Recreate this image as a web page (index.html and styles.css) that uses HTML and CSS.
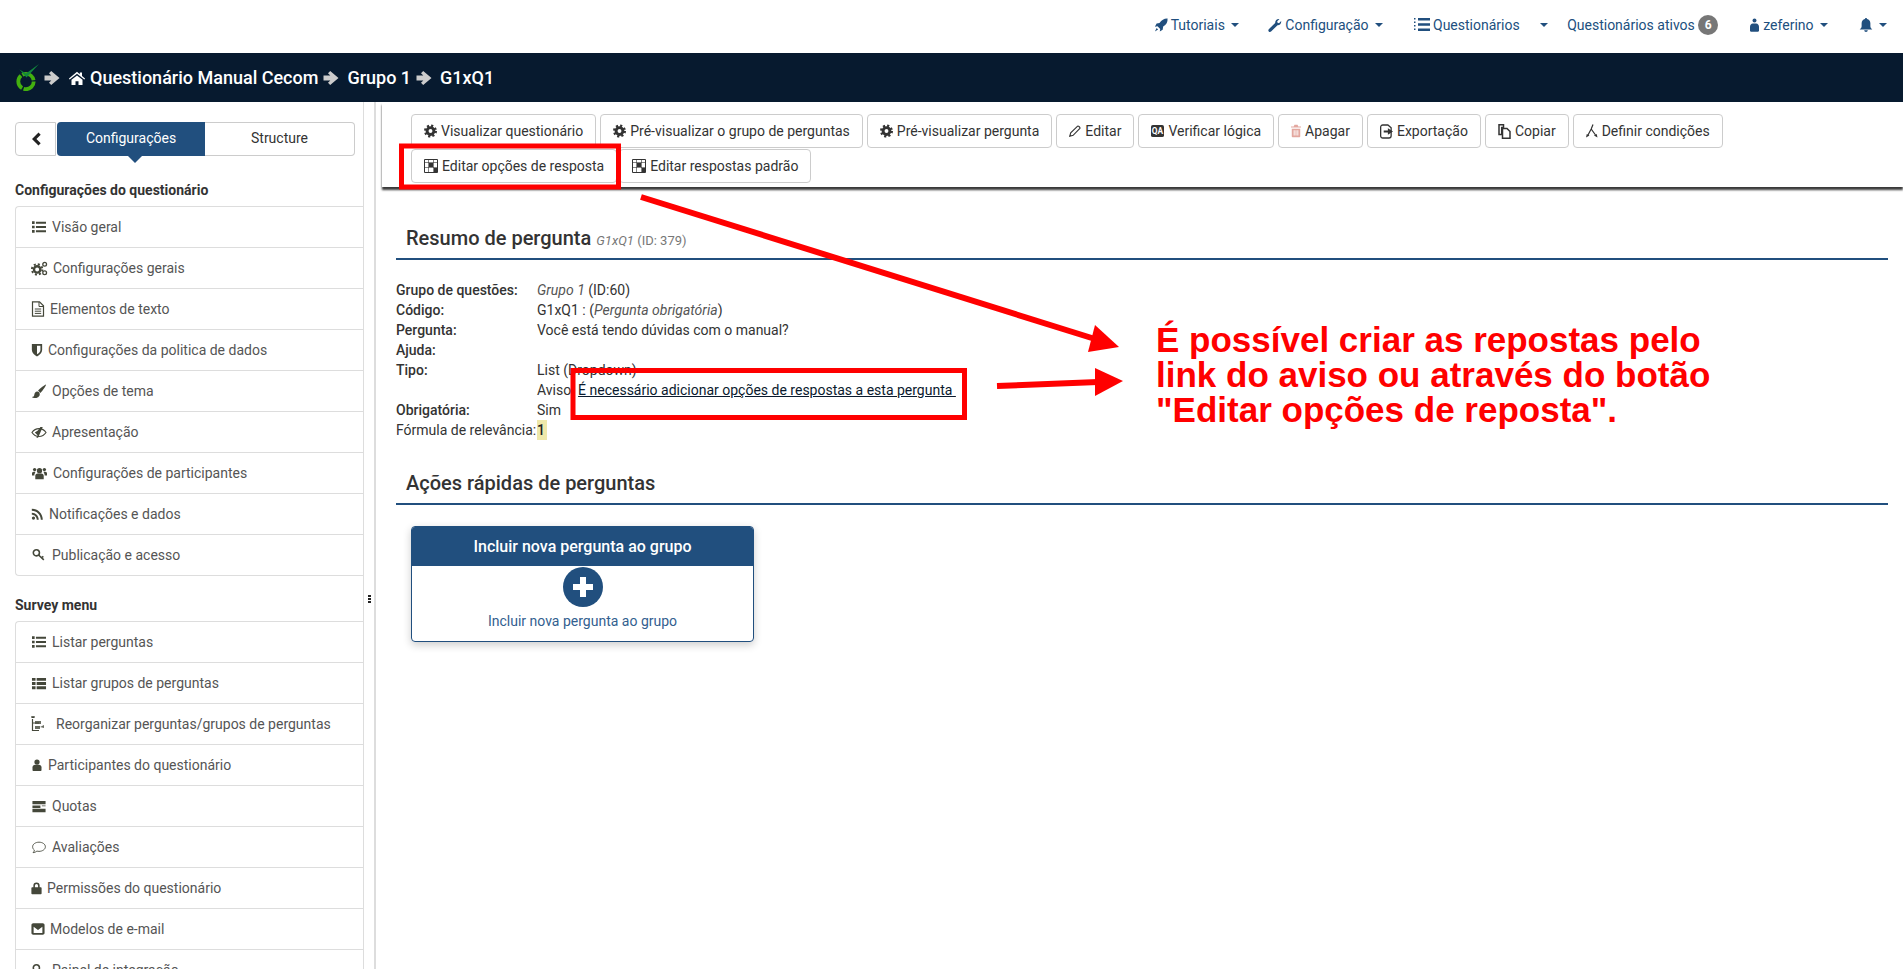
FILE: index.html
```html
<!DOCTYPE html>
<html lang="pt-BR">
<head>
    <meta charset="UTF-8">
    <meta name="viewport" content="width=device-width, initial-scale=1.0">
    <title>Resumo de pergunta</title>
    <link rel="stylesheet" href="styles.css">
</head>
<body>

<svg class="defs" width="0" height="0">
    <symbol id="i-rocket" viewBox="0 0 16 16"><path d="M15.5.5c.3 4-1.400 7-5 9.300l-.6 3.600L6.600 15.500l.5-3L4 9.400l-3 .5L3 6.300l3.300-.6C8.800 2 11.700.3 15.500.5zM3 11.500l1.700 1.700L1 15.500z"/></symbol>
    <symbol id="i-wrench" viewBox="0 0 16 16"><path d="M15 3.500c.6 2.500-1.400 5-4.100 4.800L3.500 15.500c-.8.700-2 .6-2.600-.1-.7-.7-.7-1.800 0-2.500l7.300-7.200C8 3 10.500.7 13 1.300L10.500 3.800l.4 1.700 1.700.4z"/></symbol>
    <symbol id="i-list" viewBox="0 0 16 16"><path d="M0 1.500h3v3H0zM4.500 2h11.500v2.400H4.500zM0 6.500h3v3H0zM4.500 6.800h11.500v2.400H4.500zM0 11.500h3v3H0zM4.500 11.600h11.500V14H4.500z"/></symbol>
    <symbol id="i-dots" viewBox="0 0 16 16"><path d="M0 1h1.500v1.500H0zM0 4.500h1.500V6H0zM0 8h1.500v1.500H0zM0 11.500h1.500V13H0zM4 1h12v2.400H4zM4 6.300h12v2.400H4zM4 11.600h12V14H4z"/></symbol>
    <symbol id="i-user" viewBox="0 0 16 16"><circle cx="8" cy="4" r="3.500"/><path d="M2 15v-4c0-2 1.500-3.500 3.500-3.500h5c2 0 3.500 1.500 3.500 3.500v4c0 .5-.5 1-1 1H3c-.5 0-1-.5-1-1z"/></symbol>
    <symbol id="i-person" viewBox="0 0 10 15"><circle cx="5" cy="2.500" r="2.200"/><path d="M0 14V9.500C0 7.500 1.500 5.800 3 5.800h4c1.500 0 3 1.700 3 3.700V14c0 .5-.5 1-1 1H1c-.5 0-1-.5-1-1z"/></symbol>
    <symbol id="i-bell" viewBox="0 0 16 16"><path d="M8 0c.7 0 1.200.5 1.200 1.200C11.500 1.700 13 3.500 13 6v3.500c0 1.500 1 2.700 2.200 3.500H.8C2 12.200 3 11 3 9.500V6c0-2.500 1.500-4.300 3.800-4.800C6.800.5 7.300 0 8 0zM6 14h4c0 1.100-.9 2-2 2s-2-.9-2-2z"/></symbol>
    <symbol id="i-arrow" viewBox="0 0 16 16"><path d="M.5 5.600h6.800L5 3.300 7.200.9 15.500 8l-8.300 7.100L5 12.700l2.300-2.300H.5z"/></symbol>
    <symbol id="i-home" viewBox="0 0 16 16"><path d="M8 1.800-.2 8.600l.9 1L8 3.700l7.300 5.900.9-1L13 6V2.500h-2.200V4.200zM2.500 9.800V15h4v-3.700h3V15h4V9.800L8 5.400z"/></symbol>
    <symbol id="i-cog" viewBox="0 0 16 16"><circle cx="8" cy="8" r="4.200" fill="none" stroke="currentColor" stroke-width="3.600"/><circle cx="8" cy="8" r="6.600" fill="none" stroke="currentColor" stroke-width="2.800" stroke-dasharray="2.600 2.580"/></symbol>
    <symbol id="i-grid" viewBox="0 0 14 14"><path d="M.5.500h13v13H.5z" fill="none" stroke="currentColor"/><path d="M.5 3.500h13M.5 8.500h13M4.500.5v13M9.500.5v13" fill="none" stroke="currentColor" stroke-opacity=".6"/><path d="M5 4h4v4H5zM10 9h3v4h-3z"/></symbol>
    <symbol id="i-pencil" viewBox="0 0 16 16"><path d="M11.500 1.500c1-.8 3.800 2 3 3L5.500 13.700 1 15l1.300-4.500z" fill="none" stroke="currentColor" stroke-width="1.500"/></symbol>
    <symbol id="i-trash" viewBox="1.500 0 13 16"><path d="M6 0h4l1 2h3.500v1.600h-13V2H5zM2.500 5h11v10c0 .6-.4 1-1 1h-9c-.6 0-1-.4-1-1zM5 7v7h1.200V7zM7.400 7v7h1.200V7zM9.800 7v7H11V7z"/></symbol>
    <symbol id="i-export" viewBox="0 0 14 16"><path d="M3 1h5.500L12 4v8.500c0 1.400-1 2.500-2.500 2.500H3C1.600 15 .7 14 .7 12.500v-9C.7 2 1.600 1 3 1z" fill="none" stroke="currentColor" stroke-width="1.400"/><path d="M4 6.800h4.500V4.500L14 8l-5.500 3.500V9.200H4z"/></symbol>
    <symbol id="i-copy" viewBox="0 0 13 15"><path d="M1 .8h4.500v2.700H3.700v7H1zM4.500 4.500h4.500l3 3v6.700H4.500z" fill="none" stroke="currentColor" stroke-width="1.500"/></symbol>
    <symbol id="i-fork" viewBox="0 0 12 14"><path d="M7 .5 5.200 5 2 11M5.200 5l4.300 6" fill="none" stroke="currentColor" stroke-width="1.200"/><path d="M0 13.500l.8-3.500 2.700 1.500zM8 11.500l2.700-1.500.8 3.500z"/></symbol>
    <symbol id="i-cogs" viewBox="0 0 18 16"><circle cx="6.500" cy="9" r="3.400" fill="none" stroke="currentColor" stroke-width="2.600"/><circle cx="6.500" cy="9" r="5.600" fill="none" stroke="currentColor" stroke-width="2" stroke-dasharray="2.200 2.200"/><circle cx="14.500" cy="3.500" r="2" fill="none" stroke="currentColor" stroke-width="1.400"/><circle cx="14.500" cy="12.500" r="2" fill="none" stroke="currentColor" stroke-width="1.400"/></symbol>
    <symbol id="i-file" viewBox="0 0 14 16"><path d="M1.500.8h7l4 4v10.400h-11z" fill="none" stroke="currentColor" stroke-width="1.200"/><path d="M8 1v4.500h4.500M3.800 8h6.400M3.800 10.200h6.400M3.800 12.400h6.400" fill="none" stroke="currentColor"/></symbol>
    <symbol id="i-shield" viewBox="0 0 14 16"><path d="M1 1h12v7c0 3.500-3 6-6 7.500C4 14 1 11.500 1 8zM7 3v10c2-1.200 4-2.800 4-5V3z" fill-rule="evenodd"/></symbol>
    <symbol id="i-brush" viewBox="0 0 16 16"><path d="M15.500.5c.5.500-3.800 7-6 9L7 7c2-2.200 8-7 8.500-6.500zM6.300 8c1.500.2 2.500 1.200 2.500 2.800C8.800 13.500 6 15 3.500 15 2.200 15 1 14.500.5 13.800c1.500 0 2.300-.7 2.500-2.300.2-2 1.500-3.700 3.300-3.500z"/></symbol>
    <symbol id="i-eye" viewBox="0 0 16 16"><path d="M.5 8C2.500 5 5 3.800 8 3.800S13.500 5 15.500 8c-2 3-4.500 4.200-7.500 4.200S2.500 11 .5 8z" fill="none" stroke="currentColor" stroke-width="1.200"/><path d="M3.500 8 8 5l-2 2 3.500-5h2.500L7 13.500H5.200L6.500 11z"/></symbol>
    <symbol id="i-users" viewBox="0 0 16 16"><circle cx="8" cy="5" r="2.800"/><circle cx="2.800" cy="3.800" r="1.800"/><circle cx="13.200" cy="3.800" r="1.800"/><path d="M3.500 14V10.500c0-1.500 1-2.500 2.500-2.500h4c1.500 0 2.500 1 2.500 2.500V14zM0 10V8c0-1 .7-1.800 1.800-1.800h2C3 7.500 2.500 9 2.500 10zM16 10V8c0-1-.7-1.800-1.800-1.800h-2C13 7.500 13.500 9 13.500 10z"/></symbol>
    <symbol id="i-rss" viewBox="0 0 16 16"><circle cx="3" cy="13" r="2"/><path d="M1 6.500v2.400c3.400 0 6.100 2.700 6.100 6.100h2.400c0-4.700-3.800-8.500-8.500-8.500zM1 1.500v2.400c6.100 0 11.100 5 11.100 11.100h2.400C14.500 7.500 8.500 1.500 1 1.500z"/></symbol>
    <symbol id="i-key" viewBox="0 0 16 16"><circle cx="5" cy="5.500" r="3.500" fill="none" stroke="currentColor" stroke-width="1.800"/><path d="M7.500 8l6 5.500M11 11l2-1.500" fill="none" stroke="currentColor" stroke-width="1.800"/></symbol>
    <symbol id="i-thlist" viewBox="0 0 16 16"><path d="M.5 2h3.800v3H.500zM5.500 2h10v3h-10zM.5 6.500h3.800v3H.500zM5.500 6.500h10v3h-10zM.5 11h3.800v3H.500zM5.500 11h10v3h-10z"/></symbol>
    <symbol id="i-reorg" viewBox="0 0 14 16"><path d="M1 0h2v1.500H1zM1.500 3v11.500H8M1.500 7H8" fill="none" stroke="currentColor" stroke-width="1.200"/><path d="M4 5h6v3H4zM4 10h5v3H4zM9 11l4-2v3z" opacity=".8"/></symbol>
    <symbol id="i-quota" viewBox="0 0 16 16"><path d="M1 2h14v3.500H1zM1 6.800h8.500v2.700H1zM11 6.800h4v1H11zM1 10.500h14V14H1z"/></symbol>
    <symbol id="i-bubble" viewBox="0 0 16 16"><path d="M8 2.500c4 0 7.300 2.300 7.300 5.200S12 13 8 13c-.9 0-1.700-.1-2.400-.3C4.500 13.700 3 14.300 1.200 14.500c.9-1 1.400-1.900 1.500-3C1.400 10.500.7 9.200.7 7.700.7 4.800 4 2.500 8 2.500z" fill="none" stroke="currentColor" stroke-width="1"/></symbol>
    <symbol id="i-lock" viewBox="0 0 14 16"><path d="M3 7V5a4 4 0 0 1 8 0v2h1.500c.5 0 1 .5 1 1v7c0 .5-.5 1-1 1h-11c-.5 0-1-.5-1-1V8c0-.5.5-1 1-1zm2 0h4V5a2 2 0 0 0-4 0z"/></symbol>
    <symbol id="i-mail" viewBox="0 0 16 16"><path d="M2.500 1.500h11c1 0 2 1 2 2v9c0 1-1 2-2 2h-11c-1 0-2-1-2-2v-9c0-1 1-2 2-2zM3 5.500v7h10v-7L8 9z" fill-rule="evenodd"/></symbol>
    <symbol id="i-back" viewBox="0 0 10 16"><path d="M7.500 1.500 9.700 3.700 5.400 8l4.300 4.300-2.200 2.200L1 8z"/></symbol>
</svg>

<nav class="topnav">
    <a class="topnav-item"><svg class="ic" width="14" height="14"><use href="#i-rocket"/></svg>Tutoriais <i class="caret"></i></a>
    <a class="topnav-item item-config"><svg class="ic" width="14" height="14"><use href="#i-wrench"/></svg>Configuração <i class="caret"></i></a>
    <a class="topnav-item"><svg class="ic" width="16" height="16"><use href="#i-dots"/></svg>Questionários <i class="caret caret-far"></i></a>
    <a class="topnav-item item-active">Questionários ativos <span class="badge">6</span></a>
    <a class="topnav-item item-user"><svg class="ic" width="9" height="14"><use href="#i-person"/></svg>zeferino <i class="caret"></i></a>
    <a class="topnav-item"><svg class="ic" width="14" height="16"><use href="#i-bell"/></svg><i class="caret"></i></a>
</nav>

<header class="crumbs">
    <svg class="logo" width="25" height="27" viewBox="0 0 25 27">
        <circle cx="11" cy="17.500" r="7.700" fill="none" stroke="#43b00f" stroke-width="3.800" stroke-dasharray="14.500 1.630"/>
        <path d="M4.500 5.500 11 9.500 24 0 11.500 13.500z" fill="#12873d"/>
    </svg>
    <svg class="crumb-arrow first" width="16" height="16"><use href="#i-arrow"/></svg>
    <svg class="crumb-home" width="16" height="16"><use href="#i-home"/></svg>
    <span>Questionário Manual Cecom</span>
    <svg class="crumb-arrow" width="16" height="16"><use href="#i-arrow"/></svg>
    <span>Grupo 1</span>
    <svg class="crumb-arrow" width="16" height="16"><use href="#i-arrow"/></svg>
    <span>G1xQ1</span>
</header>

<div class="main">
    <aside class="sidebar">
        <div class="tabs">
            <a class="tab-back"><svg width="10" height="16"><use href="#i-back"/></svg></a>
            <a class="tab tab-on">Configurações</a>
            <a class="tab tab-off">Structure</a>
        </div>

        <h4 class="side-title">Configurações do questionário</h4>
        <ul class="side-list">
            <li><svg class="ic" width="16" height="14"><use href="#i-list"/></svg>Visão geral</li>
            <li><svg class="ic" width="17" height="15"><use href="#i-cogs"/></svg>Configurações gerais</li>
            <li><svg class="ic" width="14" height="16"><use href="#i-file"/></svg>Elementos de texto</li>
            <li><svg class="ic" width="12" height="14"><use href="#i-shield"/></svg>Configurações da politica de dados</li>
            <li><svg class="ic" width="16" height="15"><use href="#i-brush"/></svg>Opções de tema</li>
            <li><svg class="ic" width="16" height="15"><use href="#i-eye"/></svg>Apresentação</li>
            <li><svg class="ic" width="17" height="15"><use href="#i-users"/></svg>Configurações de participantes</li>
            <li><svg class="ic" width="13" height="14"><use href="#i-rss"/></svg>Notificações e dados</li>
            <li><svg class="ic" width="16" height="14"><use href="#i-key"/></svg>Publicação e acesso</li>
        </ul>

        <h4 class="side-title">Survey menu</h4>
        <ul class="side-list">
            <li><svg class="ic" width="16" height="14"><use href="#i-list"/></svg>Listar perguntas</li>
            <li><svg class="ic" width="16" height="15"><use href="#i-thlist"/></svg>Listar grupos de perguntas</li>
            <li><svg class="ic" width="14" height="16"><use href="#i-reorg"/></svg><span class="gap-6">Reorganizar perguntas/grupos de perguntas</span></li>
            <li><svg class="ic" width="12" height="14"><use href="#i-user"/></svg>Participantes do questionário</li>
            <li><svg class="ic" width="16" height="15"><use href="#i-quota"/></svg>Quotas</li>
            <li><svg class="ic" width="16" height="14"><use href="#i-bubble"/></svg>Avaliações</li>
            <li><svg class="ic" width="11" height="14"><use href="#i-lock"/></svg>Permissões do questionário</li>
            <li><svg class="ic" width="14" height="14"><use href="#i-mail"/></svg>Modelos de e-mail</li>
            <li><svg class="ic" width="16" height="14"><use href="#i-key"/></svg>Painel de integração</li>
        </ul>
    </aside>

    <div class="handle"><i></i><i></i><i></i></div>

    <section class="content">
        <div class="toolbar">
            <div class="toolbar-row">
                <a class="btn"><svg class="ic" width="13" height="14"><use href="#i-cog"/></svg>Visualizar questionário</a>
                <a class="btn"><svg class="ic" width="13" height="14"><use href="#i-cog"/></svg>Pré-visualizar o grupo de perguntas</a>
                <a class="btn"><svg class="ic" width="13" height="14"><use href="#i-cog"/></svg>Pré-visualizar pergunta</a>
                <a class="btn"><svg class="ic" width="12" height="14"><use href="#i-pencil"/></svg>Editar</a>
                <a class="btn"><svg class="ic" width="13" height="13" viewBox="0 0 14 14"><rect width="14" height="13" rx="2"/><text class="qa" x="7" y="10">QA</text></svg>Verificar lógica</a>
                <a class="btn"><svg class="ic trash" width="10" height="14"><use href="#i-trash"/></svg>Apagar</a>
                <a class="btn"><svg class="ic" width="13" height="15"><use href="#i-export"/></svg>Exportação</a>
                <a class="btn"><svg class="ic" width="13" height="15"><use href="#i-copy"/></svg>Copiar</a>
                <a class="btn"><svg class="ic" width="12" height="14"><use href="#i-fork"/></svg>Definir condições</a>
            </div>
            <div class="toolbar-row">
                <a class="btn"><svg class="ic" width="14" height="14"><use href="#i-grid"/></svg>Editar opções de resposta</a>
                <a class="btn"><svg class="ic" width="14" height="14"><use href="#i-grid"/></svg>Editar respostas padrão</a>
            </div>
        </div>

        <div class="body">
            <h3 class="panel-title">Resumo de pergunta <small><em>G1xQ1</em> (ID: 379)</small></h3>
            <div class="summary">
                <b>Grupo de questões:</b><span><em class="soft">Grupo 1</em> (ID:60)</span>
                <b>Código:</b><span>G1xQ1 : (<em class="soft">Pergunta obrigatória</em>)</span>
                <b>Pergunta:</b><span>Você está tendo dúvidas com o manual?</span>
                <b>Ajuda:</b><span></span>
                <b>Tipo:</b><span>List (Dropdown)</span>
                <b></b><span>Aviso: <a class="warn-link">É necessário adicionar opções de respostas a esta pergunta&nbsp;</a></span>
                <b>Obrigatória:</b><span>Sim</span>
                <span class="plain">Fórmula de relevância:</span><span class="relevance">1</span>
            </div>

            <h3 class="panel-title second">Ações rápidas de perguntas</h3>
            <div class="card">
                <div class="card-head">Incluir nova pergunta ao grupo</div>
                <div class="card-body">
                    <span class="plus"></span>
                    <span>Incluir nova pergunta ao grupo</span>
                </div>
            </div>
        </div>
    </section>
</div>

<!-- marcacoes vermelhas por cima da tela -->
<svg class="marks" width="1903" height="969">
    <rect x="401.500" y="146" width="217" height="41" fill="none" stroke="#f00" stroke-width="5"/>
    <rect x="573" y="370.500" width="391.500" height="47" fill="none" stroke="#f00" stroke-width="5"/>
    <path d="M641 197 1095 339" stroke="#f00" stroke-width="6"/>
    <path d="M1119 347 1095 325 1088 352z" fill="#f00"/>
    <path d="M997 386 1098 382" stroke="#f00" stroke-width="6"/>
    <path d="M1123 381 1095 368V396z" fill="#f00"/>
</svg>
<p class="note">É possível criar as repostas pelo<br>link do aviso ou através do botão<br>"Editar opções de reposta".</p>

</body>
</html>
```

FILE: styles.css
```css
html, body {
    margin: 0;
    padding: 0;
    height: 100%;
}

body {
    position: relative;
    display: flex;
    flex-direction: column;
    height: 969px;
    overflow: hidden;
    background-color: white;
    color: #333;
    font-family: Roboto, "Liberation Sans", sans-serif;
    font-size: 14px;
}

.defs {
    position: absolute;
}

.ic {
    flex: none;
    fill: currentColor;
    vertical-align: middle;
}

/* top menu */
.topnav {
    flex: none;
    height: 53px;
    display: flex;
    justify-content: flex-end;
    align-items: center;
    padding: 0 16px 3px 0;
    box-sizing: border-box;
    color: #214f7e;
}

.topnav-item {
    display: flex;
    align-items: center;
    margin-left: 31px;
    white-space: pre;
}

.topnav-item .ic {
    margin-right: 3px;
}

.item-config {
    margin-left: 29px;
}

.item-active {
    margin-left: 19px;
}

.item-user {
    margin-left: 32px;
}

.item-user .ic {
    margin-right: 4px;
}

.caret {
    width: 0;
    height: 0;
    margin-left: 3px;
    border-top: 4px solid #214f7e;
    border-left: 4px solid transparent;
    border-right: 4px solid transparent;
}

.caret-far {
    margin-left: 17px;
}

.badge {
    width: 20px;
    height: 20px;
    border-radius: 50%;
    background-color: #777;
    color: white;
    font-size: 12px;
    font-weight: bold;
    line-height: 20px;
    text-align: center;
}

/* breadcrumb */
.crumbs {
    flex: none;
    height: 49px;
    display: flex;
    align-items: center;
    padding-left: 15px;
    box-sizing: border-box;
    background-color: #071a2f;
    color: white;
    font-size: 18px;
    font-weight: 500;
}

.crumb-arrow {
    flex: none;
    margin: 0 8px 0 5px;
    fill: #ccc;
}

.crumb-arrow.first {
    margin: 0 9px 0 4px;
}

.crumb-home {
    flex: none;
    margin-right: 5px;
    fill: white;
}

.main {
    flex: 1;
    display: flex;
    min-height: 0;
}

/* sidebar */
.sidebar {
    flex: none;
    width: 364px;
    box-sizing: border-box;
    padding: 20px 0 0 15px;
    border-right: 1px solid #ddd;
    overflow: hidden;
}

.tabs {
    display: flex;
    height: 34px;
    margin-right: 8px;
}

.tab-back {
    width: 41px;
    box-sizing: border-box;
    margin-right: 1px;
    display: flex;
    align-items: center;
    justify-content: center;
    border: 1px solid #ccc;
    border-radius: 4px 0 0 4px;
    fill: #222;
}

.tab {
    display: flex;
    align-items: center;
    justify-content: center;
    position: relative;
    padding-bottom: 2px;
    box-sizing: border-box;
}

.tab-on {
    width: 148px;
    background-color: #214f7e;
    color: white;
    border-radius: 4px 0 0 4px;
}

.tab-on::after {
    content: "";
    position: absolute;
    left: 71px;
    top: 34px;
    border-top: 7px solid #214f7e;
    border-left: 7px solid transparent;
    border-right: 7px solid transparent;
}

.tab-off {
    flex: 1;
    border: 1px solid #ccc;
    border-left: none;
    border-radius: 0 4px 4px 0;
}

.side-title {
    margin: 0;
    height: 15px;
    font-size: 14px;
    font-weight: 700;
    line-height: 15px;
    color: #333;
}

.tabs + .side-title {
    margin-top: 27px;
    margin-bottom: 8px;
}

.side-list + .side-title {
    margin-top: 22px;
    margin-bottom: 8px;
}

.side-list {
    list-style: none;
    margin: 0;
    padding: 0;
    border: 1px solid #ddd;
    border-right: none;
    border-radius: 4px 0 0 4px;
}

.side-list li {
    height: 41px;
    box-sizing: border-box;
    display: flex;
    align-items: center;
    padding-left: 15px;
    color: #555;
    border-bottom: 1px solid #ddd;
}

.side-list li:last-child {
    height: 40px;
    border-bottom: none;
}

.side-list .ic {
    margin-right: 5px;
    color: #44473a;
}

.gap-6 {
    margin-left: 6px;
}

.handle {
    flex: none;
    width: 10px;
    display: flex;
    flex-direction: column;
    align-items: center;
    gap: 1px;
    padding-top: 493px;
    box-sizing: border-box;
}

.handle i {
    width: 3px;
    height: 2px;
    background-color: #222;
}

/* main column */
.content {
    flex: 1;
    min-width: 0;
    border-left: 2px solid #ddd;
    overflow: hidden;
}

.toolbar {
    padding: 12px 0 4px 29px;
    margin-left: 6px;
    display: flex;
    flex-direction: column;
    gap: 1px;
    box-shadow: 0 3px 2px 0 #3a3a3a;
}

.toolbar-row {
    display: flex;
    gap: 4px;
}

.toolbar-row + .toolbar-row {
    gap: 2px;
}

.btn {
    height: 34px;
    box-sizing: border-box;
    display: flex;
    align-items: center;
    padding: 0 12px;
    background-color: white;
    border: 1px solid #ccc;
    border-radius: 4px;
    color: #333;
    white-space: nowrap;
}

.btn .ic {
    margin-right: 4px;
}

.btn .trash {
    color: #e3a79f;
}

.qa {
    fill: white;
    font-size: 9px;
    font-weight: 700;
    text-anchor: middle;
}

.body {
    padding: 0 15px 0 20px;
}

.panel-title {
    margin: 39px 0 0;
    padding: 0 0 5px 10px;
    border-bottom: 2px solid #214f7e;
    font-size: 20px;
    font-weight: 500;
    line-height: 24px;
    color: #333;
}

.panel-title small {
    font-size: 13px;
    font-weight: 400;
    color: #777;
}

.panel-title.second {
    margin-top: 31px;
    padding-bottom: 8px;
}

.summary {
    display: grid;
    grid-template-columns: 141px 1fr;
    grid-auto-rows: 20px;
    margin-top: 20px;
    line-height: 20px;
}

.summary b {
    font-weight: 500;
}

.soft {
    color: #555;
}

.warn-link {
    color: #0a1a2e;
    text-decoration: underline;
}

.relevance {
    width: 10px;
    height: 20px;
    background-color: #eee8aa;
    font-weight: 500;
    color: #222;
}

.card {
    width: 343px;
    height: 116px;
    box-sizing: border-box;
    margin: 21px 0 0 15px;
    border: 1px solid #214f7e;
    border-radius: 4px;
    box-shadow: 0 3px 8px rgba(0, 0, 0, 0.2);
    overflow: hidden;
}

.card-head {
    height: 39px;
    background-color: #214f7e;
    color: white;
    font-size: 16px;
    font-weight: 500;
    line-height: 39px;
    text-align: center;
}

.card-body {
    display: flex;
    flex-direction: column;
    align-items: center;
    color: #33608f;
}

.plus {
    position: relative;
    width: 40px;
    height: 40px;
    margin: 1px 0 6px;
    border-radius: 50%;
    background-color: #214f7e;
}

.plus::before,
.plus::after {
    content: "";
    position: absolute;
    background-color: white;
}

.plus::before {
    left: 10px;
    top: 17px;
    width: 20px;
    height: 6px;
}

.plus::after {
    left: 17px;
    top: 10px;
    width: 6px;
    height: 20px;
}

/* red marks over the page */
.marks {
    position: absolute;
    left: 0;
    top: 0;
    pointer-events: none;
}

.note {
    position: absolute;
    left: 1156px;
    top: 322px;
    margin: 0;
    color: #f00;
    font-family: "Liberation Sans", Arial, sans-serif;
    font-size: 35px;
    font-weight: 700;
    line-height: 35px;
    white-space: nowrap;
}
```
